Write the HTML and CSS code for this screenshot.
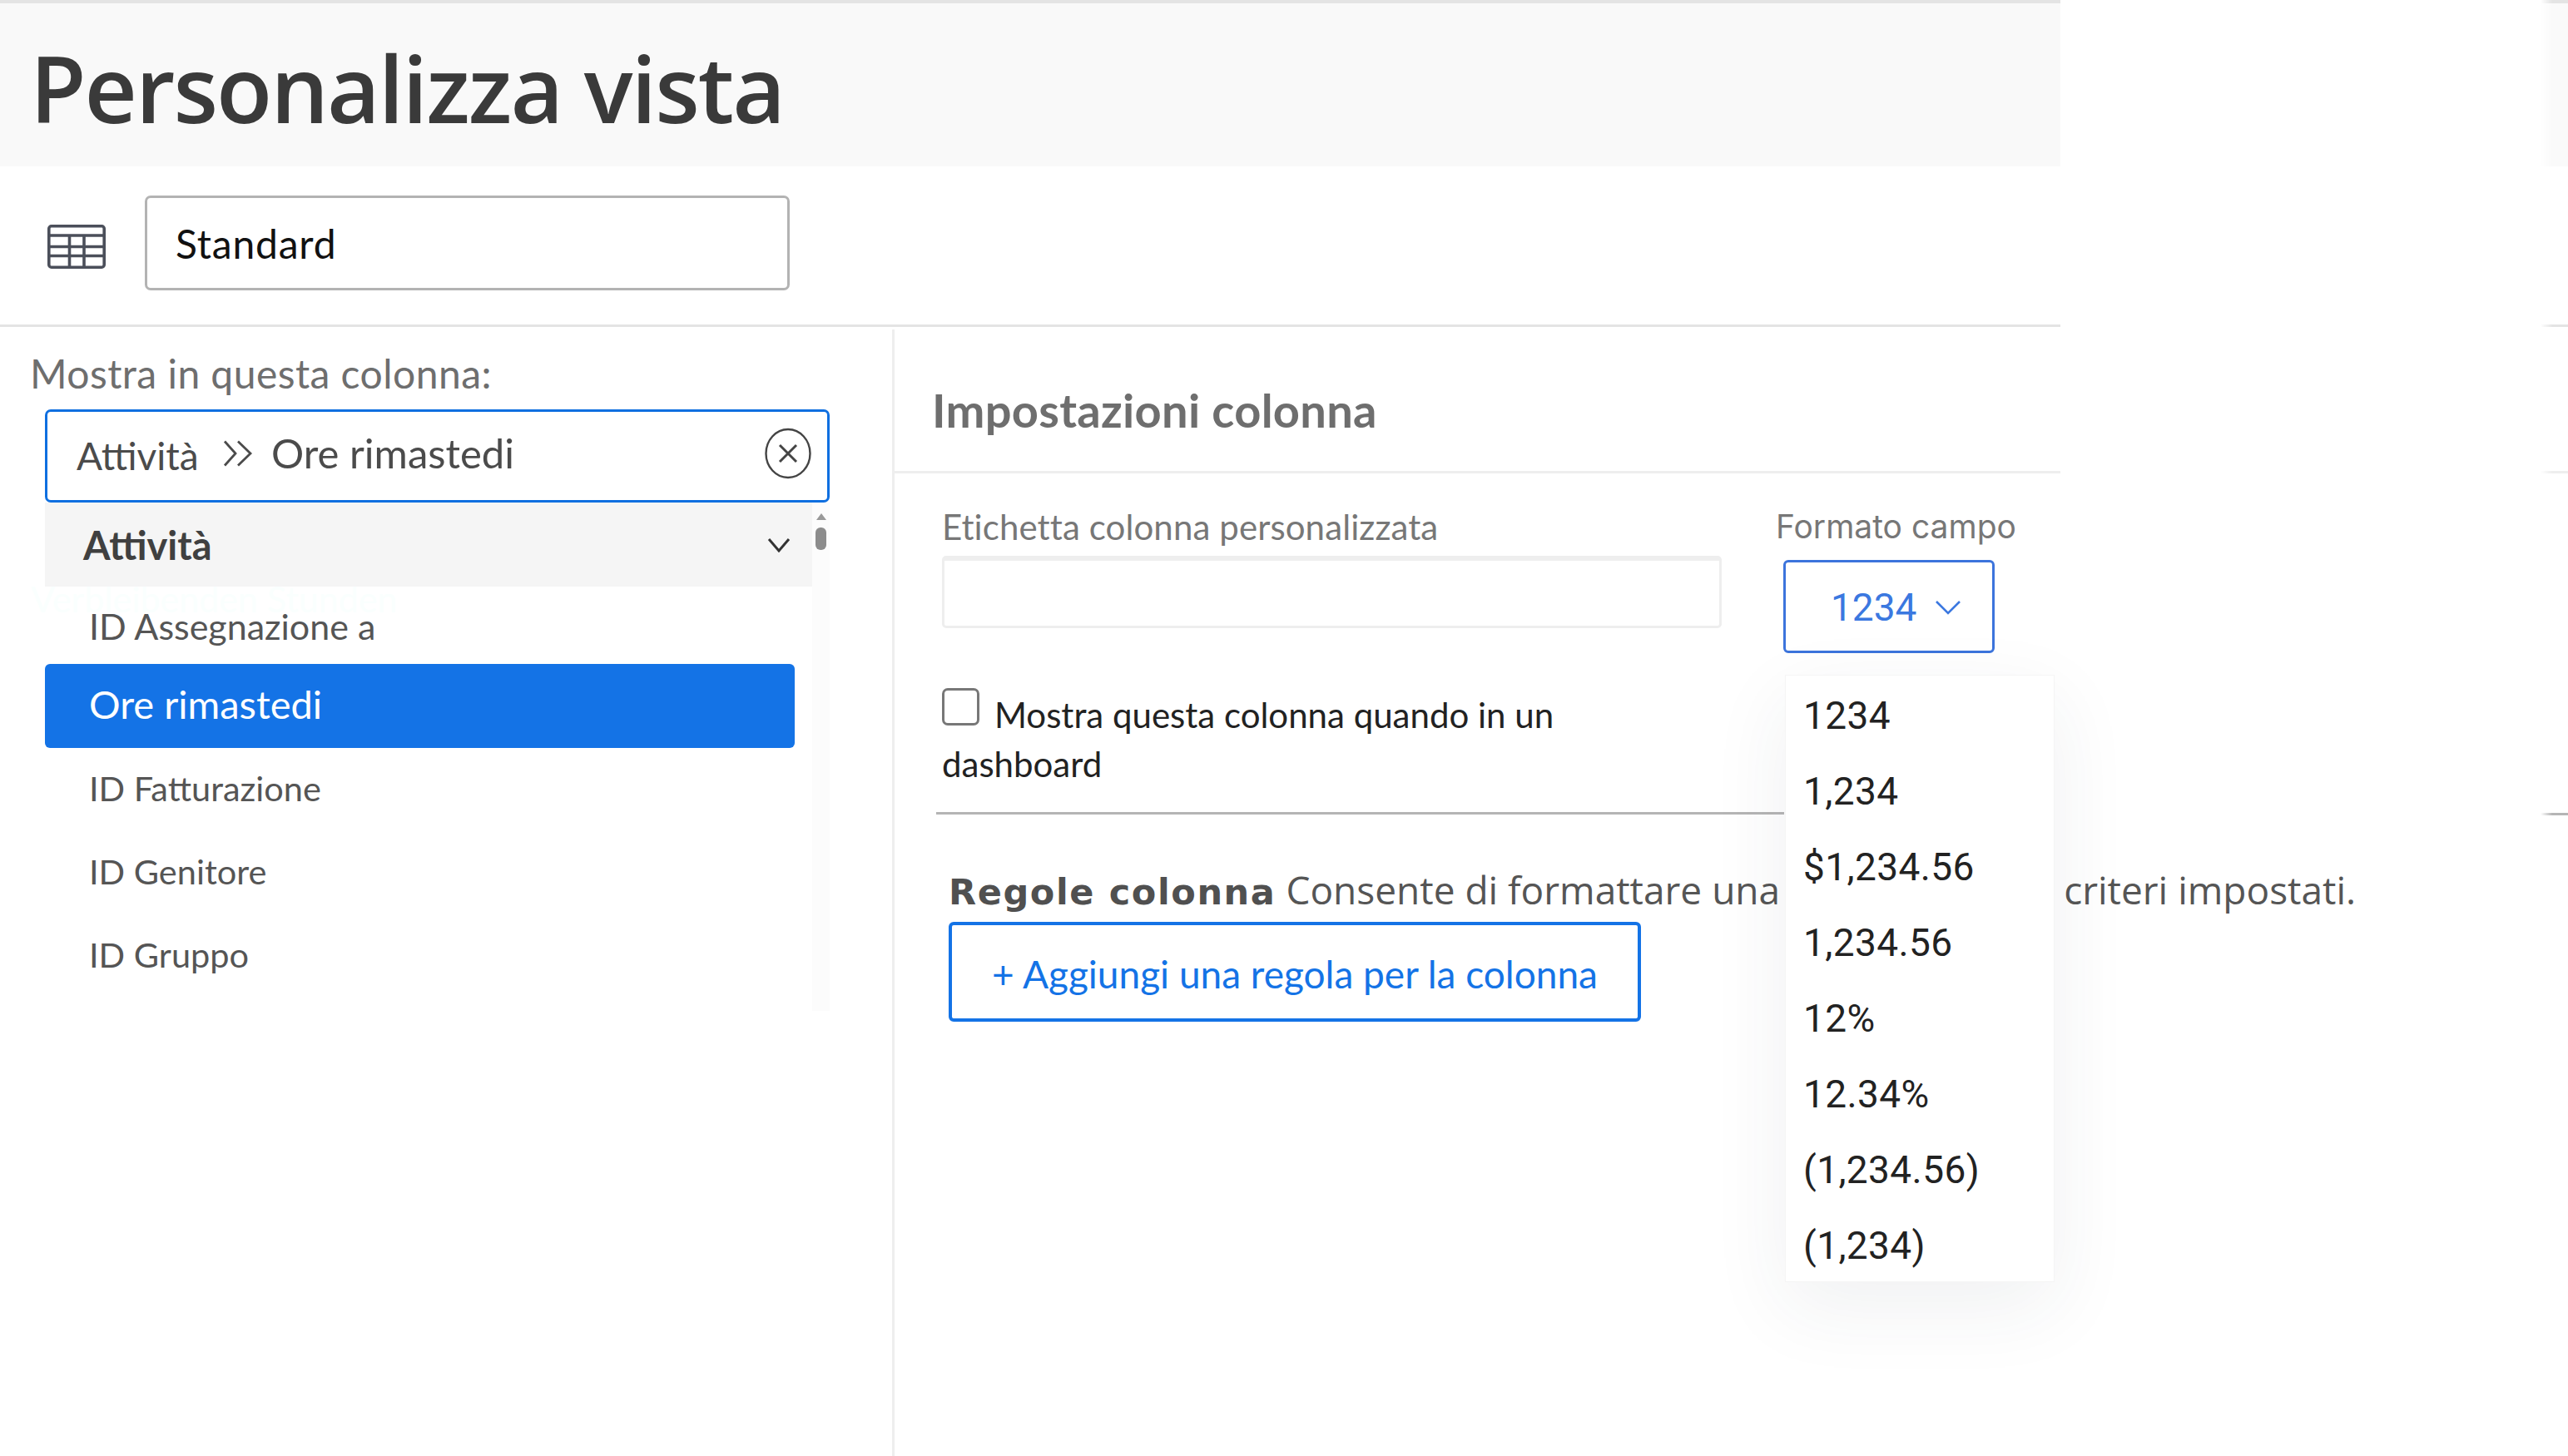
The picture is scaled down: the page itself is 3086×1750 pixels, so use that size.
FILE: index.html
```html
<!DOCTYPE html>
<html lang="it">
<head>
<meta charset="utf-8">
<title>Personalizza vista</title>
<link rel="stylesheet" href="styles.css">
</head>
<body>
<div class="panel">
  <div class="top-line"></div>
  <header class="header"><h1 class="title">Personalizza vista</h1></header>
  <div class="toolbar">
    <svg class="table-icon" width="70" height="53" viewBox="0 0 70 53" fill="none" stroke="#4b4f5a" stroke-width="3.6">
      <rect x="1.8" y="1.8" width="66.4" height="49.4" rx="3"/>
      <path d="M2 13H68M2 26.500H68M2 37.500H68M26.500 13V51M44 13V51"/>
    </svg>
    <div class="view-name">Standard</div>
  </div>
  <div class="main">
    <section class="left">
      <div class="left-label">Mostra in questa colonna:</div>
      <div class="picker">
        <span class="crumb">Attività</span>
        <svg class="crumb-sep" width="36" height="32" viewBox="0 0 36 32" fill="none" stroke="#4b4b4b" stroke-width="2.8"><path d="M2 1.500L15 16L2 30.500M18 1.500L33 16L18 30.500"/></svg>
        <span class="crumb-current">Ore rimastedi</span>
        <svg class="clear" width="58" height="62" viewBox="0 0 58 62" fill="none" stroke="#444" stroke-width="2.400"><ellipse cx="29" cy="31" rx="26.500" ry="29"/><path d="M19 21L39 41M39 21L19 41" stroke-width="3"/></svg>
      </div>
      <div class="list">
        <div class="list-main">
          <div class="group">
            <span>Attività</span>
            <svg width="28" height="18" viewBox="0 0 28 18" fill="none" stroke="#333" stroke-width="3"><path d="M2 2L14 16L26 2"/></svg>
          </div>
          <span class="ghost">Verbleibenden Stunden</span>
          <div class="item item-first">ID Assegnazione a</div>
          <div class="item-selected">Ore rimastedi</div>
          <div class="item">ID Fatturazione</div>
          <div class="item">ID Genitore</div>
          <div class="item">ID Gruppo</div>
        </div>
        <div class="scrollbar">
          <span class="scroll-arrow"></span>
          <span class="scroll-thumb"></span>
        </div>
      </div>
    </section>
    <section class="right">
      <h2 class="settings-title">Impostazioni colonna</h2>
      <div class="fields">
        <div class="field-label">
          <label class="label">Etichetta colonna personalizzata</label>
          <div class="text-input"></div>
        </div>
        <div class="field-format">
          <label class="label-format">Formato campo</label>
          <div class="select-wrap">
            <div class="select">
              <span>1234</span>
              <svg width="32" height="18" viewBox="0 0 32 18" fill="none" stroke="#3b78e0" stroke-width="2.600"><path d="M2 2L16 16L30 2"/></svg>
            </div>
            <ul class="dropdown">
              <li>1234</li>
              <li>1,234</li>
              <li>$1,234.56</li>
              <li>1,234.56</li>
              <li>12%</li>
              <li>12.34%</li>
              <li>(1,234.56)</li>
              <li>(1,234)</li>
            </ul>
          </div>
        </div>
      </div>
      <p class="check-line"><span class="checkbox"></span>Mostra questa colonna quando in un dashboard</p>
      <div class="rule"></div>
      <div class="rules-line">
        <strong class="rules-title">Regole colonna</strong>
        <span class="rules-text">Consente di formattare una</span>
        <span class="rules-tail">criteri impostati.</span>
      </div>
      <button class="add-rule" type="button">+ Aggiungi una regola per la colonna</button>
    </section>
  </div>
</div>
<div class="strip">
  <div class="strip-top"></div>
  <div class="strip-header"></div>
  <div class="strip-gap-a"></div>
  <div class="strip-gap-b"></div>
  <div class="strip-gap-c"></div>
</div>
</body>
</html>
```

FILE: styles.css
```css
* { box-sizing: border-box; }
html, body { margin: 0; padding: 0; }
body {
  width: 3086px;
  height: 1750px;
  overflow: hidden;
  background: #fff;
  display: flex;
  justify-content: space-between;
  font-family: "Lato", "Liberation Sans", sans-serif;
}
.panel { width: 2476px; height: 1750px; display: flex; flex-direction: column; }
.top-line { height: 4px; background: #e4e4e4; flex: none; }
.header { height: 196px; flex: none; background: #f9f9f9; padding: 36px 0 0 36px; }
.title {
  margin: 0;
  font-family: "Open Sans", sans-serif;
  font-weight: 600;
  font-size: 110px;
  line-height: 130px;
  letter-spacing: -2px;
  color: #3a3a3a;
}
.toolbar {
  height: 193px;
  flex: none;
  display: flex;
  padding: 35px 0 0 57px;
  gap: 47px;
  border-bottom: 3px solid #e4e4e4;
}
.table-icon { margin-top: 35px; flex: none; }
.view-name {
  width: 775px;
  height: 114px;
  border: 3px solid #b3b3b3;
  border-radius: 7px;
  padding-left: 34px;
  font-size: 48px;
  letter-spacing: .8px;
  line-height: 110px;
  color: #111;
}
.main { flex: 1; display: flex; min-height: 0; }
.left {
  width: 1075px;
  flex: none;
  border-right: 3px solid #eee;
  padding: 24px 0 0 36px;
  margin-top: 3px;
}
.left-label { font-size: 48px; letter-spacing: .45px; line-height: 60px; color: #6e6e6e; height: 73px; margin-top: -1px; }
.picker {
  margin-left: 18px;
  width: 943px;
  height: 112px;
  border: 3px solid #0f6fe0;
  border-radius: 7px;
  padding-left: 35px;
  padding-right: 18px;
  display: flex;
  align-items: center;
  color: #4b4b4b;
  font-size: 46px;
  line-height: 60px;
}
.crumb { width: 176px; flex: none; }
.crumb-sep { flex: none; margin-right: 22px; margin-top: -6px; }
.crumb-current { flex: 1; margin-bottom: 8px; font-size: 49px; }
.clear { flex: none; margin-top: -6px; }
.list { margin-left: 18px; width: 943px; height: 611px; display: flex; }
.list-main { width: 922px; flex: none; position: relative; }
.group {
  height: 101px;
  background: #f5f5f5;
  padding: 0 26px 0 46px;
  display: flex;
  align-items: center;
  justify-content: space-between;
  font-size: 47px;
  font-weight: 700;
  color: #404040;
}
.ghost {
  position: absolute;
  left: -17px;
  top: 100px;
  font-size: 43px;
  line-height: 32px;
  color: #fafffe;
}
.item {
  height: 100px;
  padding-left: 53px;
  font-size: 41.5px;
  line-height: 100px;
  color: #555;
}
.item-first { height: 93px; line-height: 95px; font-size: 43px; }
.item-selected {
  width: 901px;
  height: 101px;
  margin-bottom: -2px;
  padding-left: 53px;
  background: #1473e6;
  border-radius: 6px;
  color: #fff;
  font-size: 47px;
  line-height: 96px;
}
.scrollbar {
  width: 21px;
  flex: none;
  background: #fcfcfc;
  display: flex;
  flex-direction: column;
  align-items: center;
  padding-top: 13px;
}
.scroll-arrow {
  width: 0;
  height: 0;
  border-left: 6px solid transparent;
  border-right: 6px solid transparent;
  border-bottom: 8px solid #999;
}
.scroll-thumb { width: 13px; height: 27px; margin-top: 9px; background: #8c8c8c; border-radius: 6px; }
.right { flex: 1; min-width: 0; }
.settings-title {
  margin: 0;
  height: 176px;
  padding: 50px 0 0 45px;
  border-bottom: 3px solid #eee;
  font-size: 56px;
  letter-spacing: .3px;
  line-height: 100px;
  font-weight: 700;
  color: #6e6e6e;
}
.fields { display: flex; gap: 66px; padding: 39px 0 0 57px; }
.field-label { width: 937px; flex: none; }
.label { display: block; font-size: 42px; letter-spacing: .1px; line-height: 50px; color: #777; }
.text-input {
  margin-top: 10px;
  height: 87px;
  border: 3px solid #eee;
  border-top-width: 6px;
  border-radius: 5px;
}
.label-format {
  display: block;
  margin-left: -1px;
  font-family: "Inter", sans-serif;
  font-size: 39px;
  line-height: 50px;
  color: #777;
}
.select-wrap { position: relative; margin: 15px 0 0 8px; }
.select {
  width: 254px;
  height: 112px;
  border: 3px solid #3c74dc;
  border-radius: 6px;
  padding: 2px 0 0 54px;
  display: flex;
  align-items: center;
  gap: 22px;
  font-family: "Roboto", sans-serif;
  font-size: 46px;
  color: #3b78e0;
}
.dropdown {
  position: absolute;
  left: 2px;
  top: 138px;
  width: 324px;
  height: 730px;
  margin: 0;
  padding: 3px 0 0 21px;
  list-style: none;
  background: #fff;
  border: 1px solid #f5f5f5;
  box-shadow: 0 30px 90px rgba(40, 50, 70, .07);
  font-family: "Roboto", sans-serif;
  font-size: 46px;
  letter-spacing: .4px;
  line-height: 91px;
  color: #222;
  z-index: 2;
}
.check-line {
  margin: 42px 0 0 57px;
  width: 840px;
  font-size: 42px;
  line-height: 59px;
  color: #222;
}
.checkbox {
  display: inline-block;
  width: 45px;
  height: 45px;
  margin-right: 18px;
  vertical-align: 3px;
  border: 3px solid #777;
  border-radius: 7px;
}
.rule { margin: 28px 0 0 50px; width: 1019px; height: 3px; background: #b5b5b5; }
.rules-line {
  margin: 60px 0 0 65px;
  display: flex;
  align-items: baseline;
  white-space: nowrap;
  line-height: 60px;
}
.rules-title { font-family: "DejaVu Sans", sans-serif; font-weight: 700; font-size: 43px; letter-spacing: 1.6px; color: #505050; }
.rules-text { margin-left: 12px; font-family: "Open Sans", sans-serif; font-size: 46px; color: #555; }
.rules-tail { margin-left: 341px; font-family: "Open Sans", sans-serif; font-size: 46px; color: #555; }
.add-rule {
  display: block;
  margin: 6px 0 0 65px;
  width: 832px;
  height: 120px;
  padding: 4px 0 0;
  background: #fff;
  border: 4px solid #1473e6;
  border-radius: 6px;
  font-family: "Lato", sans-serif;
  font-size: 46px;
  color: #1473e6;
}
.strip {
  width: 33px;
  height: 1750px;
  display: flex;
  flex-direction: column;
  -webkit-mask-image: linear-gradient(90deg, transparent, #000 14px);
  mask-image: linear-gradient(90deg, transparent, #000 14px);
}
.strip-top { height: 4px; background: #e4e4e4; }
.strip-header { height: 196px; background: #fafafa; }
.strip-gap-a { height: 193px; border-bottom: 3px solid #e4e4e4; }
.strip-gap-b { height: 176px; border-bottom: 3px solid #eee; }
.strip-gap-c { height: 411px; border-bottom: 3px solid #b5b5b5; }
```
